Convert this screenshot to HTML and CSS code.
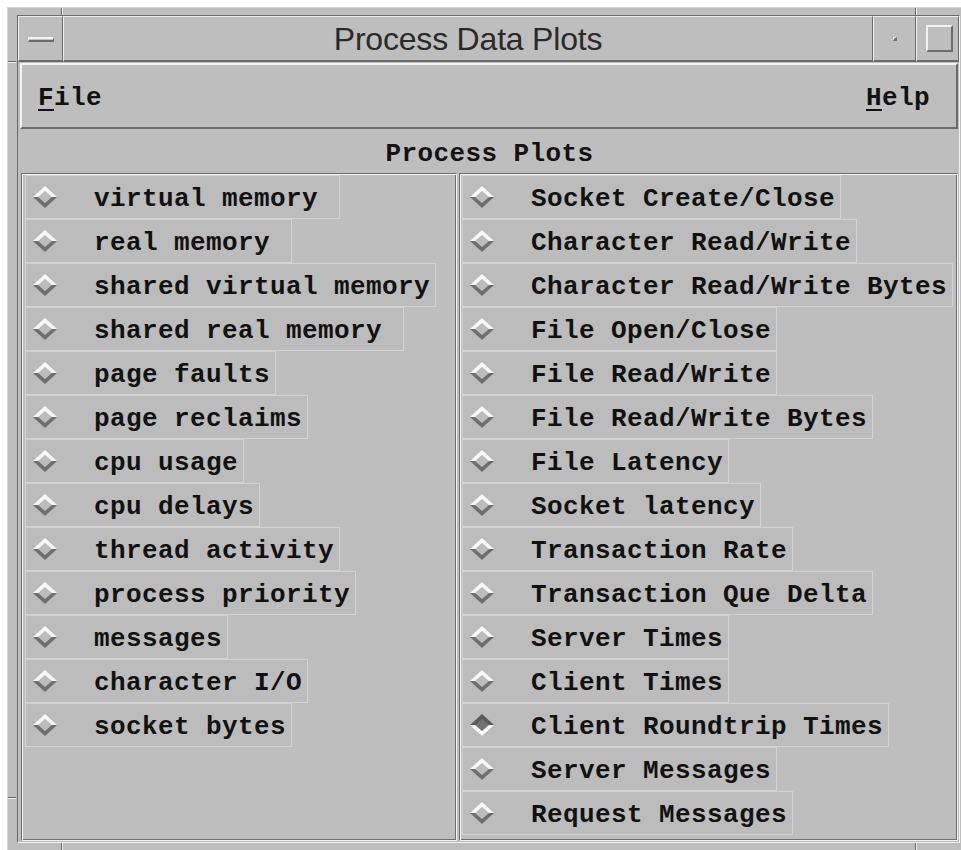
FILE: index.html
```html
<!DOCTYPE html>
<html lang="en">
<head>
<meta charset="utf-8">
<title>Process Data Plots</title>
<link rel="stylesheet" href="styles.css">
</head>
<body>
<svg class="defs" width="0" height="0" aria-hidden="true">
  <defs>
    <!-- Motif-style diamond toggle indicators -->
    <symbol id="dia-off" viewBox="0 0 24 22">
      <polygon points="0,11 12,0 24,11" fill="#f8f8f8"/>
      <polygon points="0,11 12,22 24,11" fill="#6e6e6e"/>
      <polygon points="5,11 12,5 19,11 12,17" fill="#bcbcbc"/>
    </symbol>
    <symbol id="dia-on" viewBox="0 0 24 22">
      <polygon points="0,11 12,0 24,11" fill="#5a5a5a"/>
      <polygon points="0,11 12,22 24,11" fill="#f8f8f8"/>
      <polygon points="5,11 12,5 19,11 12,17" fill="#727272"/>
    </symbol>
  </defs>
</svg>

<div class="frame">
  <div class="frame-inner">
    <div class="titlebar">
      <div class="tb-btn tb-menu"><span class="menu-bar"></span></div>
      <div class="tb-title">Process Data Plots</div>
      <div class="tb-btn tb-min"><span class="min-dot"></span></div>
      <div class="tb-btn tb-max"><span class="max-box"></span></div>
    </div>

    <div class="client">
      <div class="menubar">
        <span class="menu-item"><span class="mnemonic">F</span>ile</span>
        <span class="menu-item"><span class="mnemonic">H</span>elp</span>
      </div>

      <div class="heading">Process Plots</div>

      <div class="panels">
        <div class="panel panel-left">
          <div class="toggle"><svg class="dia"><use href="#dia-off"/></svg><span class="label">virtual memory </span></div>
          <div class="toggle"><svg class="dia"><use href="#dia-off"/></svg><span class="label">real memory </span></div>
          <div class="toggle"><svg class="dia"><use href="#dia-off"/></svg><span class="label">shared virtual memory</span></div>
          <div class="toggle"><svg class="dia"><use href="#dia-off"/></svg><span class="label">shared real memory </span></div>
          <div class="toggle"><svg class="dia"><use href="#dia-off"/></svg><span class="label">page faults</span></div>
          <div class="toggle"><svg class="dia"><use href="#dia-off"/></svg><span class="label">page reclaims</span></div>
          <div class="toggle"><svg class="dia"><use href="#dia-off"/></svg><span class="label">cpu usage</span></div>
          <div class="toggle"><svg class="dia"><use href="#dia-off"/></svg><span class="label">cpu delays</span></div>
          <div class="toggle"><svg class="dia"><use href="#dia-off"/></svg><span class="label">thread activity</span></div>
          <div class="toggle"><svg class="dia"><use href="#dia-off"/></svg><span class="label">process priority</span></div>
          <div class="toggle"><svg class="dia"><use href="#dia-off"/></svg><span class="label">messages</span></div>
          <div class="toggle"><svg class="dia"><use href="#dia-off"/></svg><span class="label">character I/O</span></div>
          <div class="toggle"><svg class="dia"><use href="#dia-off"/></svg><span class="label">socket bytes</span></div>
        </div>

        <div class="panel panel-right">
          <div class="toggle"><svg class="dia"><use href="#dia-off"/></svg><span class="label">Socket Create/Close</span></div>
          <div class="toggle"><svg class="dia"><use href="#dia-off"/></svg><span class="label">Character Read/Write</span></div>
          <div class="toggle"><svg class="dia"><use href="#dia-off"/></svg><span class="label">Character Read/Write Bytes</span></div>
          <div class="toggle"><svg class="dia"><use href="#dia-off"/></svg><span class="label">File Open/Close</span></div>
          <div class="toggle"><svg class="dia"><use href="#dia-off"/></svg><span class="label">File Read/Write</span></div>
          <div class="toggle"><svg class="dia"><use href="#dia-off"/></svg><span class="label">File Read/Write Bytes</span></div>
          <div class="toggle"><svg class="dia"><use href="#dia-off"/></svg><span class="label">File Latency</span></div>
          <div class="toggle"><svg class="dia"><use href="#dia-off"/></svg><span class="label">Socket latency</span></div>
          <div class="toggle"><svg class="dia"><use href="#dia-off"/></svg><span class="label">Transaction Rate</span></div>
          <div class="toggle"><svg class="dia"><use href="#dia-off"/></svg><span class="label">Transaction Que Delta</span></div>
          <div class="toggle"><svg class="dia"><use href="#dia-off"/></svg><span class="label">Server Times</span></div>
          <div class="toggle"><svg class="dia"><use href="#dia-off"/></svg><span class="label">Client Times</span></div>
          <div class="toggle toggle-on"><svg class="dia"><use href="#dia-on"/></svg><span class="label">Client Roundtrip Times</span></div>
          <div class="toggle"><svg class="dia"><use href="#dia-off"/></svg><span class="label">Server Messages</span></div>
          <div class="toggle"><svg class="dia"><use href="#dia-off"/></svg><span class="label">Request Messages</span></div>
        </div>
      </div>
    </div>
  </div>

  <!-- resize-handle marks on the window border -->
  <span class="tick tick-v tick-top-left"></span>
  <span class="tick tick-v tick-top-right"></span>
  <span class="tick tick-v tick-bottom-left"></span>
  <span class="tick tick-v tick-bottom-right"></span>
  <span class="tick tick-h tick-left-bottom"></span>
  <span class="tick tick-h tick-left-top"></span>
</div>
</body>
</html>
```

FILE: styles.css
```css
html, body {
  margin: 0;
  padding: 0;
  background: #ffffff;
}

.defs {
  position: absolute;
  width: 0;
  height: 0;
  overflow: hidden;
}

/* ---- window manager frame ---- */
.frame {
  position: relative;
  box-sizing: border-box;
  margin: 7px 0 0 7px;
  width: 954px;
  height: 843px;
  padding: 7px 0 0 9px;
  background: #bebebe;
  border-top: 1px solid #d8d8d8;
  border-left: 1px solid #d8d8d8;
  overflow: hidden;
}

.frame-inner {
  box-sizing: border-box;
  width: 943px;
  height: 828px;
  border-top: 1px solid #6a6a6a;
  border-left: 1px solid #6a6a6a;
  border-bottom: 1px solid #f2f2f2;
  border-right: 1px solid #f2f2f2;
  display: flex;
  flex-direction: column;
}

.tick {
  position: absolute;
  box-sizing: border-box;
}
.tick-v {
  width: 2px;
  height: 8px;
  border-left: 1px solid #6a6a6a;
  border-right: 1px solid #f0f0f0;
}
.tick-h {
  height: 2px;
  width: 9px;
  border-top: 1px solid #6a6a6a;
  border-bottom: 1px solid #f0f0f0;
}
.tick-top-left { left: 53px; top: -1px; }
.tick-top-right { left: 907px; top: -1px; }
.tick-bottom-left { left: 53px; top: 835px; }
.tick-bottom-right { left: 907px; top: 835px; }
.tick-left-bottom { left: -1px; top: 789px; }
.tick-left-top { left: -1px; top: 53px; }

/* ---- title bar ---- */
.titlebar {
  height: 46px;
  display: flex;
  flex: none;
}

.tb-btn,
.tb-title {
  box-sizing: border-box;
  border-top: 1px solid #efefef;
  border-left: 1px solid #efefef;
  border-bottom: 2px solid #6a6a6a;
  border-right: 1px solid #6a6a6a;
  display: flex;
  align-items: center;
  justify-content: center;
}

.tb-menu { width: 45px; }
.tb-min { width: 43px; }
.tb-max { width: 43px; }

.tb-title {
  flex: 1;
  font-family: "Liberation Sans", Arial, sans-serif;
  font-size: 32px;
  color: #2a2a2a;
  letter-spacing: -0.2px;
  padding-top: 1px;
}

.menu-bar {
  display: block;
  width: 26px;
  height: 5px;
  box-sizing: border-box;
  background: #c4c4c4;
  border-top: 2px solid #f4f4f4;
  border-bottom: 2px solid #6c6c6c;
  border-left: 1px solid #f4f4f4;
  border-right: 1px solid #6c6c6c;
  margin-top: 2px;
}

.min-dot {
  display: block;
  width: 4px;
  height: 4px;
  box-sizing: border-box;
  border-top: 1px solid #f4f4f4;
  border-left: 1px solid #f4f4f4;
  border-bottom: 2px solid #6c6c6c;
  border-right: 2px solid #6c6c6c;
}

.max-box {
  display: block;
  width: 27px;
  height: 27px;
  box-sizing: border-box;
  border-top: 2px solid #f2f2f2;
  border-left: 2px solid #f2f2f2;
  border-bottom: 2px solid #6c6c6c;
  border-right: 2px solid #6c6c6c;
  margin-left: 3px;
}

/* ---- client area ---- */
.client {
  flex: 1;
  box-sizing: border-box;
  padding: 1px 1px 0 2px;
  display: flex;
  flex-direction: column;
  font-family: "Liberation Mono", "Courier New", monospace;
  font-weight: bold;
  font-size: 26px;
  letter-spacing: 0.4px;
  color: #111111;
}

.menubar {
  box-sizing: border-box;
  height: 66px;
  flex: none;
  border-top: 2px solid #f4f4f4;
  border-left: 2px solid #f4f4f4;
  border-bottom: 2px solid #6a6a6a;
  border-right: 2px solid #6a6a6a;
  display: flex;
  align-items: center;
  justify-content: space-between;
  padding: 3px 26px 0 16px;
}

.menu-item {
  white-space: pre;
}

.mnemonic {
  text-decoration: underline;
  text-decoration-thickness: 2px;
  text-underline-offset: 4px;
}

.heading {
  height: 44px;
  flex: none;
  box-sizing: border-box;
  padding-top: 7px;
  line-height: 37px;
  text-align: center;
  margin-left: 1px;
}

.panels {
  display: flex;
  gap: 2px;
  margin-left: 1px;
  height: 668px;
  flex: none;
}

.panel {
  box-sizing: border-box;
  height: 668px;
  border-top: 1px solid #6e6e6e;
  border-left: 1px solid #6e6e6e;
  border-bottom: 1px solid #f2f2f2;
  border-right: 1px solid #f2f2f2;
  box-shadow: inset 1px 1px 0 #f2f2f2, inset -1px -1px 0 #6e6e6e;
  display: flex;
  flex-direction: column;
  align-items: flex-start;
  padding-top: 1px;
}

.panel-left {
  width: 436px;
  padding-left: 3px;
}

.panel-right {
  width: 499px;
  padding-left: 2px;
}

.toggle {
  box-sizing: border-box;
  height: 44px;
  display: flex;
  align-items: center;
  background: #bcbcbc;
  border: 1px solid #d3d3d3;
  padding: 0 5px 0 7px;
  flex: none;
}

.dia {
  width: 24px;
  height: 22px;
  flex: none;
  margin-right: 37px;
}

.label {
  white-space: pre;
  line-height: 30px;
  margin-top: 4px;
}
```
